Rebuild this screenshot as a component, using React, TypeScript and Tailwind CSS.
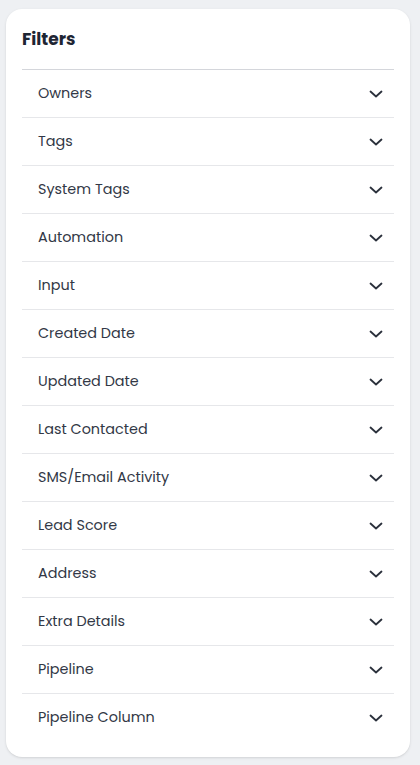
const filters = [
    'Owners',
    'Tags',
    'System Tags',
    'Automation',
    'Input',
    'Created Date',
    'Updated Date',
    'Last Contacted',
    'SMS/Email Activity',
    'Lead Score',
    'Address',
    'Extra Details',
    'Pipeline',
    'Pipeline Column',
]

function Chevron() {
    return (
        <svg width="14" height="8" viewBox="0 0 14 8" fill="none" className="text-[#2a303b]">
            <path d="M1.5 1.5 L7 6.5 L12.5 1.5" stroke="currentColor" strokeWidth="1.8" strokeLinecap="round" strokeLinejoin="round" />
        </svg>
    )
}

export default function App() {
    return (
        <div
            className="min-h-[765px] bg-[#eef0f3] pt-[9px] pl-[6px]"
            style={{ fontFamily: 'Poppins, "Noto Sans", "Open Sans", sans-serif' }}
        >
            <div className="w-[404px] bg-white rounded-2xl shadow-sm px-4 pt-4 pb-4">
                <h2 className="text-[17px] leading-7 font-bold text-[#1e2533] mb-4">Filters</h2>
                <div>
                    {filters.map((f, i) => (
                        <button
                            key={f}
                            className={`w-full h-12 flex items-center justify-between pl-4 pr-[11px] border-t ${i === 0 ? 'border-[#d4d6db]' : 'border-[#e6e7ea]'}`}
                        >
                            <span className="text-[14.4px] text-[#323846]">{f}</span>
                            <Chevron />
                        </button>
                    ))}
                </div>
            </div>
        </div>
    )
}
